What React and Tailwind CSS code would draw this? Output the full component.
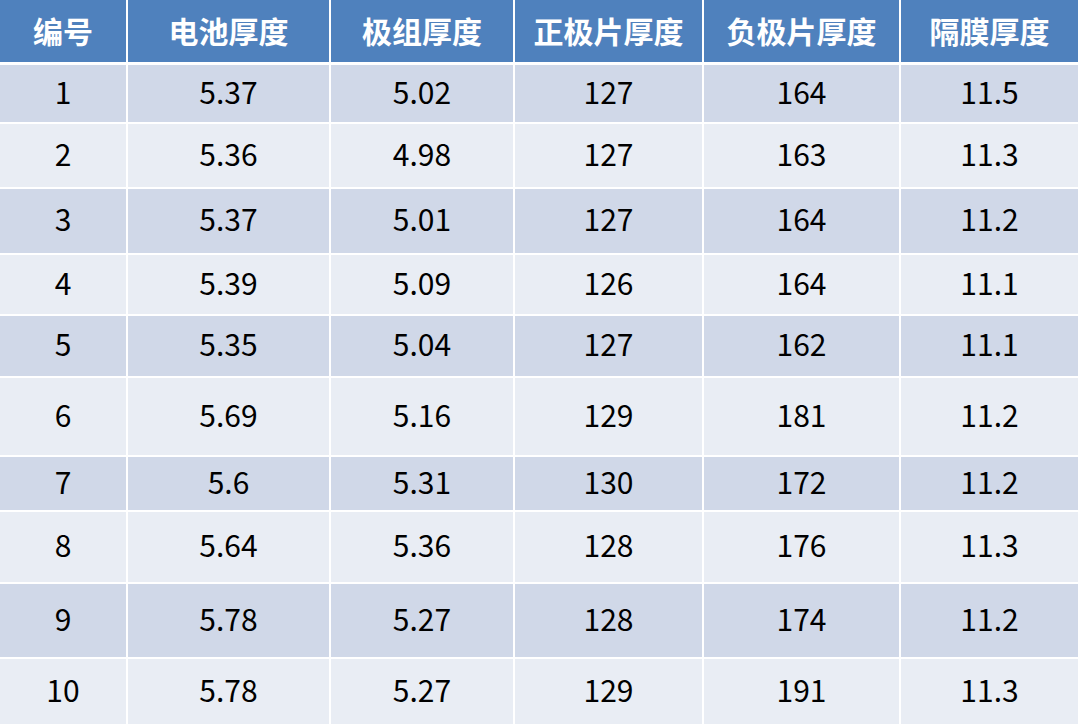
import React from 'react';

const headers = ['编号', '电池厚度', '极组厚度', '正极片厚度', '负极片厚度', '隔膜厚度'];

const rows = [
  { h: 'h-[57px]', v: ['1', '5.37', '5.02', '127', '164', '11.5'] },
  { h: 'h-[63px]', v: ['2', '5.36', '4.98', '127', '163', '11.3'] },
  { h: 'h-[64px]', v: ['3', '5.37', '5.01', '127', '164', '11.2'] },
  { h: 'h-[59px]', v: ['4', '5.39', '5.09', '126', '164', '11.1'] },
  { h: 'h-[60px]', v: ['5', '5.35', '5.04', '127', '162', '11.1'] },
  { h: 'h-[77px]', v: ['6', '5.69', '5.16', '129', '181', '11.2'] },
  { h: 'h-[53px]', v: ['7', '5.6', '5.31', '130', '172', '11.2'] },
  { h: 'h-[70px]', v: ['8', '5.64', '5.36', '128', '176', '11.3'] },
  { h: 'h-[73px]', v: ['9', '5.78', '5.27', '128', '174', '11.2'] },
  { h: 'h-[65px]', v: ['10', '5.78', '5.27', '129', '191', '11.3'] },
];

const cols = 'grid grid-cols-[126px_201px_182px_187px_195px_177px] gap-x-[2px]';

export default function App() {
  return (
    <div
      className="w-[1080px] h-[728px] bg-white overflow-hidden"
      style={{ fontFamily: '"Noto Sans CJK SC", "Noto Sans", sans-serif' }}
    >
      <div className="w-[1078px] flex flex-col gap-y-[2px]">
        <div className={`${cols} h-[62px] mb-[1px]`}>
          {headers.map((t) => (
            <div key={t} className="bg-[#4f81bd] flex items-center justify-center text-white text-[30px] font-bold pb-[2px]">
              {t}
            </div>
          ))}
        </div>
        {rows.map((r, i) => (
          <div key={i} className={`${cols} ${r.h}`}>
            {r.v.map((c, j) => (
              <div
                key={j}
                className={`${i % 2 === 0 ? 'bg-[#d0d8e8]' : 'bg-[#e9edf4]'} flex items-center justify-center text-black text-[30px] pb-[5px]`}
              >
                {c}
              </div>
            ))}
          </div>
        ))}
      </div>
    </div>
  );
}
